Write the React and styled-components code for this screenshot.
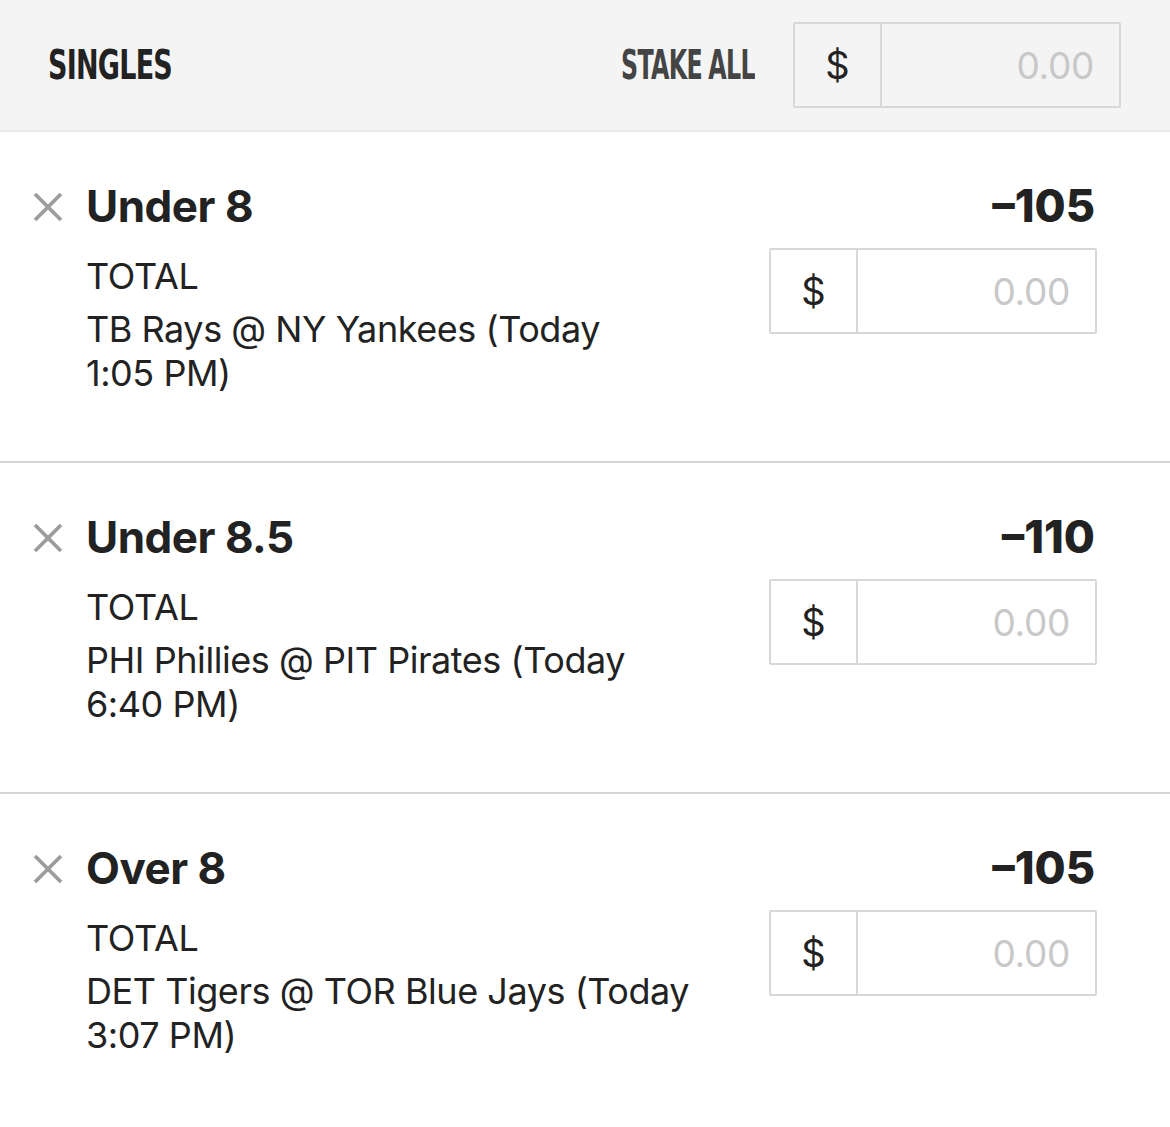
import React from 'react';
import styled, { createGlobalStyle } from 'styled-components';

const GlobalStyle = createGlobalStyle`
  html, body {
    margin: 0;
    padding: 0;
    background: #ffffff;
  }
  body {
    font-family: 'Inter', 'Liberation Sans', sans-serif;
    color: #222;
  }
`;

const Header = styled.div`
  display: flex;
  align-items: center;
  height: 130px;
  padding: 0 49px 0 48px;
  background: #f4f4f4;
  border-bottom: 2px solid #ebebeb;
`;

const HeaderTitle = styled.h2`
  margin: 0;
  flex: 1;
  font-family: 'DejaVu Sans Condensed', 'DejaVu Sans', sans-serif;
  font-weight: bold;
  font-size: 40px;
  letter-spacing: -1px;
  color: #222;
  transform: scaleX(0.75);
  transform-origin: left center;
`;

const StakeLabel = styled.span`
  font-family: 'DejaVu Sans Condensed', 'DejaVu Sans', sans-serif;
  font-weight: bold;
  font-size: 40px;
  letter-spacing: -1px;
  word-spacing: -2px;
  color: #444;
  margin-right: 38px;
  transform: scaleX(0.66);
  transform-origin: right center;
`;

const StakeBox = styled.div`
  display: flex;
  width: 328px;
  height: 86px;
  box-sizing: border-box;
  border: 2px solid #d8d8d8;
  border-radius: 2px;
  background: ${(p) => p.bg || '#fff'};
`;

const Currency = styled.div`
  width: 85px;
  display: flex;
  align-items: center;
  justify-content: center;
  border-right: 2px solid #d8d8d8;
  font-size: 38px;
  color: #222;
`;

const Amount = styled.div`
  flex: 1;
  display: flex;
  align-items: center;
  justify-content: flex-end;
  padding-right: 25px;
  font-size: 37px;
  letter-spacing: -0.3px;
  color: #c8c8c8;
`;

const Row = styled.div`
  display: grid;
  grid-template-columns: 30px 1fr 328px;
  column-gap: 23px;
  padding: 48px 73px 0 33px;
  height: 331px;
  box-sizing: border-box;
  border-bottom: ${(p) => (p.last ? 'none' : '2px solid #d4d4d4')};
`;

const Remove = styled.button`
  border: none;
  background: none;
  padding: 0;
  margin-top: 12px;
  width: 30px;
  height: 30px;
  display: flex;
  cursor: pointer;
`;

const Info = styled.div`
  display: flex;
  flex-direction: column;
`;

const Pick = styled.div`
  font-size: 44px;
  font-weight: 700;
  line-height: 52px;
  letter-spacing: -0.5px;
  color: #222;
`;

const Market = styled.div`
  margin-top: 22px;
  font-size: 36px;
  font-weight: 400;
  line-height: 44px;
  letter-spacing: -0.3px;
  color: #222;
`;

const Event = styled.div`
  margin-top: 9px;
  font-size: 36px;
  line-height: 44px;
  letter-spacing: -0.45px;
  color: #222;
`;

const Side = styled.div`
  display: flex;
  flex-direction: column;
  align-items: stretch;
`;

const Odds = styled.div`
  font-size: 45px;
  font-weight: 800;
  line-height: 52px;
  text-align: right;
  padding-right: 2px;
  margin-bottom: 16px;
  color: #222;
`;

const bets = [
  { pick: 'Under 8', odds: '\u2013105', event: 'TB Rays @ NY Yankees', time: '1:05 PM' },
  { pick: 'Under 8.5', odds: '\u2013110', event: 'PHI Phillies @ PIT Pirates', time: '6:40 PM' },
  { pick: 'Over 8', odds: '\u2013105', event: 'DET Tigers @ TOR Blue Jays', time: '3:07 PM' },
];

const CloseIcon = () => (
  <svg width="30" height="30" viewBox="0 0 30 30">
    <path d="M2 2 L28 28 M28 2 L2 28" stroke="#9c9c9c" strokeWidth="3.8" strokeLinecap="butt" />
  </svg>
);

const BetRow = ({ pick, odds, event, time, last }) => (
  <Row last={last}>
    <Remove aria-label="Remove">
      <CloseIcon />
    </Remove>
    <Info>
      <Pick>{pick}</Pick>
      <Market>TOTAL</Market>
      <Event>
        {event} (Today
        <br />
        {time})
      </Event>
    </Info>
    <Side>
      <Odds>{odds}</Odds>
      <StakeBox>
        <Currency>$</Currency>
        <Amount>0.00</Amount>
      </StakeBox>
    </Side>
  </Row>
);

const App = () => (
  <>
    <GlobalStyle />
    <Header>
      <HeaderTitle>SINGLES</HeaderTitle>
      <StakeLabel>STAKE ALL</StakeLabel>
      <StakeBox bg="#f4f4f4">
        <Currency>$</Currency>
        <Amount>0.00</Amount>
      </StakeBox>
    </Header>
    {bets.map((b, i) => (
      <BetRow key={b.pick} {...b} last={i === bets.length - 1} />
    ))}
  </>
);

export default App;
